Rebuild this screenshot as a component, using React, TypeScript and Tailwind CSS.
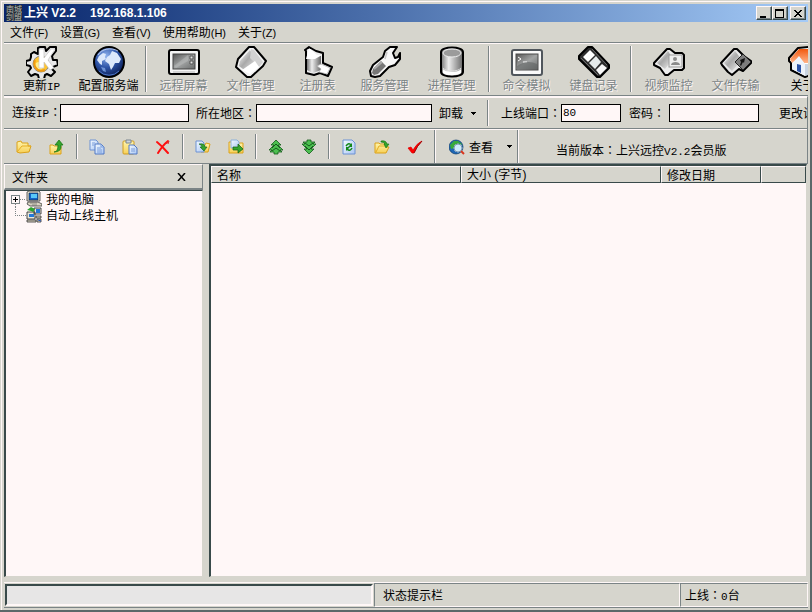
import React, { useState } from 'react';

const FACE = 'bg-[#d6d5cd]';

// ---------- shared bits ----------

const Defs = () => (
  <svg width="0" height="0" className="absolute" aria-hidden="true">
    <defs>
      <linearGradient id="silver" x1="0" y1="0" x2="1" y2="1">
        <stop offset="0" stopColor="#ffffff" />
        <stop offset="0.45" stopColor="#a9a9a9" />
        <stop offset="1" stopColor="#f4f4f4" />
      </linearGradient>
      <linearGradient id="screen" x1="0" y1="0" x2="1" y2="1">
        <stop offset="0" stopColor="#555" />
        <stop offset="0.5" stopColor="#a2a4a4" />
        <stop offset="1" stopColor="#686a6a" />
      </linearGradient>
      <linearGradient id="tube" x1="0" x2="1">
        <stop offset="0" stopColor="#777" />
        <stop offset="0.35" stopColor="#ededed" />
        <stop offset="1" stopColor="#666" />
      </linearGradient>
      <radialGradient id="globe" cx="0.4" cy="0.3" r="0.75">
        <stop offset="0" stopColor="#8fb2ee" />
        <stop offset="0.5" stopColor="#2e55a8" />
        <stop offset="1" stopColor="#07184e" />
      </radialGradient>
      <linearGradient id="roof" x1="0" y1="0" x2="0" y2="1">
        <stop offset="0" stopColor="#f2590f" />
        <stop offset="1" stopColor="#ffb48a" />
      </linearGradient>
      <linearGradient id="folder" x1="0" y1="0" x2="0" y2="1">
        <stop offset="0" stopColor="#fff6ae" />
        <stop offset="1" stopColor="#f7cf56" />
      </linearGradient>
      <linearGradient id="page" x1="0" y1="0" x2="1" y2="1">
        <stop offset="0" stopColor="#f4faff" />
        <stop offset="1" stopColor="#a9c6f3" />
      </linearGradient>
    </defs>
  </svg>
);

const Big = ({ children }: { children: React.ReactNode }) => (
  <svg width="32" height="32" viewBox="0 0 32 32" aria-hidden="true" className="shrink-0">
    {children}
  </svg>
);

const Small = ({ children }: { children: React.ReactNode }) => (
  <svg width="16" height="16" viewBox="0 0 16 16" aria-hidden="true" className="shrink-0">
    {children}
  </svg>
);

const Latin = ({ children }: { children: React.ReactNode }) => (
  <span className="font-['Liberation_Mono',monospace] text-[11px]">{children}</span>
);

const Colon = () => <span className="font-['Noto_Sans_CJK_TC',sans-serif]">：</span>;

const Arrow = () => (
  <svg width="5" height="3" viewBox="0 0 5 3" shapeRendering="crispEdges" aria-hidden="true">
    <path d="M0 0h5v1H4v1H3v1H2V2H1V1H0z" />
  </svg>
);

const Separator = ({ className = '' }: { className?: string }) => (
  <div className={`flex shrink-0 justify-center self-stretch ${className}`}>
    <div className="w-0.5 border-l border-r border-l-[#7b8486] border-r-[#fff7f7]" />
  </div>
);

// ---------- large icons ----------

const GearIcon = () => (
  <Big>
    <path
      d="M5 8l3-2 4 2V2l2-1h5l1 4 4-4h6v4l-4 5 1 4h4l1 5-5 2-1 2 3 3-4 4-4-2-2 1-1 4h-5l-1-4-3-1-4 2-3-4 3-4-1-2-4-1v-4l4-1 1-3z"
      fill="#e9e9e9" stroke="#000" strokeWidth="2" strokeLinejoin="round"
    />
    <circle cx="15" cy="18" r="8" fill="#ffc42e" stroke="#8a8a8a" />
    <circle cx="13" cy="20" r="4" fill="#ffee8a" />
    <path d="M9 14a8 8 0 0 0 3 10 8 8 0 0 0 7 0" fill="none" stroke="#f09a10" strokeWidth="2" />
    <path d="M13 3h5v9l7-9h4l-7 11 6 8-4 2-6-8v6h-5z" fill="#fff" stroke="#c4c4c4" strokeWidth="0.7" />
  </Big>
);

const GlobeIcon = () => (
  <Big>
    <circle cx="16" cy="16" r="15" fill="url(#globe)" stroke="#000" strokeWidth="2" />
    <path d="M4 14l2-4 4-3 3 1-1 3 1 2-4 2 0 4-2-1zM14 11l3-2 2-4 5 2 4 6-2 4-4 0-2 4-2 3-2-6-4-3z" fill="#dce8fb" />
    <path d="M8 21l4 1 1 4-3-1z" fill="#6c91d4" />
    <path d="M5 9a13 10 0 0 1 20-4" fill="none" stroke="#e8f0ff" strokeOpacity="0.7" />
    <path d="M6 25a14 14 0 0 0 20 0" fill="none" stroke="#4c76c4" />
  </Big>
);

const ScreenIcon = () => (
  <Big>
    <rect x="1" y="4" width="30" height="24" rx="2" fill="#f4f4f4" stroke="#000" strokeWidth="2" />
    <rect x="5" y="8" width="22" height="15" fill="url(#screen)" stroke="#444" />
    <path d="M6 20L20 9v6L8 22z" fill="#b9bcbc" opacity="0.5" />
    <path d="M22 10h3v3h-3zM22 15h3v3h-3z" fill="#e6e6e6" stroke="#555" />
    <path d="M5 26h22" stroke="#b5b5b5" />
  </Big>
);

const DiamondPagesIcon = () => (
  <Big>
    <path d="M14 1h5l12 14-3 5-12 11h-4L1 21 3 13z" fill="#f2f2f2" stroke="#000" strokeWidth="2" strokeLinejoin="round" />
    <path d="M5 15L15 4l7 13-10 9-8-6z" fill="url(#silver)" />
    <path d="M16 3l3 1 9 12-4 5-9-9z" fill="#d2d2d2" />
    <path d="M7 24l13-9 4 6-9 7z" fill="#fff" />
  </Big>
);

const RegistryIcon = () => (
  <Big>
    <path d="M3 4l4-3 7 4 7 2v10l9 4-4 9-8-3-6 2-8-2V5z" fill="#ededed" stroke="#000" strokeWidth="2" strokeLinejoin="round" />
    <path d="M5 12v12l6 3 8-3V9l-7 3z" fill="url(#tube)" />
    <path d="M4 13l3-11 8 7 5 0-7 4z" fill="#fff" />
    <path d="M15 20l4-2 9 4-3 6-8-2 2-3z" fill="#fff" stroke="#aaa" strokeWidth="0.7" />
  </Big>
);

const WrenchIcon = () => (
  <Big>
    <path
      d="M16 5l5-4h7l-4 6 2 5 3-1 2-4v6l-5 6-6 2-9 9-5 1-4-1-1-5 3-6 10-8z"
      fill="#f7f7f7" stroke="#000" strokeWidth="2" strokeLinejoin="round"
    />
    <path d="M12 15l5 5-8 8-4 1-2-2 1-4z" fill="#777" />
    <path d="M5 23l8-7" stroke="#aaa" strokeWidth="2" />
    <path d="M16 13l2-7" stroke="#c8c8c8" strokeWidth="1.5" />
  </Big>
);

const CylinderIcon = () => (
  <Big>
    <path d="M5 6c0-6 22-6 22 0v20c0 6-22 6-22 0z" fill="url(#tube)" stroke="#000" strokeWidth="2" />
    <ellipse cx="16" cy="7" rx="9" ry="4" fill="#9b9b9b" stroke="#eee" />
    <path d="M7 23c3 4 15 4 18 0v4c-3 3-15 3-18 0z" fill="#fff" />
    <path d="M7 22c3 4 15 4 18 0" fill="none" stroke="#ddd" />
  </Big>
);

const ConsoleIcon = () => (
  <Big>
    <rect x="1" y="4" width="30" height="25" rx="2" fill="#fafafa" stroke="#50565c" strokeWidth="2" />
    <rect x="5" y="8" width="22" height="16" fill="url(#screen)" stroke="#4b4b4b" />
    <path d="M7 11l3 2-3 2M12 16h4" fill="none" stroke="#fff" />
    <path d="M6 20q10-7 20-2v5H6z" fill="#606464" opacity="0.6" />
  </Big>
);

const KeysIcon = () => (
  <Big>
    <path d="M10 1h4l17 18v3l-9 9h-3L1 13v-3z" fill="#2d2d2d" stroke="#000" strokeWidth="2" strokeLinejoin="round" />
    <path d="M5 11l7-7 5 5-7 7z" fill="#fff" />
    <path d="M11 17l7-7 5 6-6 7z" fill="#e6ebeb" />
    <path d="M18 24l6-6 5 4-7 7z" fill="#f8f8f8" />
    <path d="M3 12l17 17M14 3l15 16" stroke="#8a8a8a" strokeWidth="0.7" />
  </Big>
);

const VideoIcon = () => (
  <Big>
    <path d="M14 3h3l5 4h7l2 2v13l-2 2h-8l-6 5h-3l-5-7-6-3v-2z" fill="#ececec" stroke="#000" strokeWidth="2" strokeLinejoin="round" />
    <path d="M4 17L15 5l5 8-8 10z" fill="url(#silver)" />
    <rect x="16" y="9" width="13" height="12" fill="#eee" stroke="#999" />
    <circle cx="22" cy="13" r="2" fill="#8b8b8b" />
    <path d="M18 19c0-4 9-4 9 0z" fill="#8b8b8b" />
  </Big>
);

const TransferIcon = () => (
  <Big>
    <path d="M14 3h3l7 7 7 5v2l-8 8-4-2-7 6-4-3-6-7-1-2z" fill="#e8e8e8" stroke="#000" strokeWidth="2" strokeLinejoin="round" />
    <path d="M4 17L15 5l7 9-10 11z" fill="url(#silver)" />
    <path d="M23 8l8 8-8 8-8-8z" fill="#7c7c7c" stroke="#222" />
    <path d="M20 14l5-2-1 5-1-1-2 4-1-1 1-3z" fill="#111" />
  </Big>
);

const HouseIcon = () => (
  <Big>
    <path d="M2 12L11 2l11-1 9 11-2 4v11l-11 4L4 24v-7l-2-2z" fill="#fff" stroke="#000" strokeWidth="2" strokeLinejoin="round" />
    <path d="M3 13L12 3h10l8 10-2 4H17l-5-6-7 6z" fill="url(#roof)" />
    <path d="M5 18l7-8 6 8v12L5 23z" fill="#eef3fb" />
    <path d="M10 18l4 1v8l-4-2z" fill="#2d54a8" />
    <path d="M18 18h10v9l-10 3z" fill="#c9d4e2" />
  </Big>
);

// ---------- small icons ----------

const FolderIcon = () => (
  <Small>
    <path d="M1 13V3l4-1 1 2h6v3h3l-2 6-9 1z" fill="url(#folder)" stroke="#dba21b" />
    <path d="M1 13l5-6 9 0" fill="none" stroke="#e5ad25" />
  </Small>
);

const FolderUpIcon = () => (
  <Small>
    <path d="M1 6h3l1 1h7v8H1z" fill="url(#folder)" stroke="#dba21b" />
    <path d="M5 13q4 0 4-7H6l4-5 4 5h-2q1 7-7 7z" fill="#35a52e" stroke="#12700f" strokeWidth="0.7" />
  </Small>
);

const CopyIcon = () => (
  <Small>
    <path d="M1 1h6l2 2v8H1z" fill="url(#page)" stroke="#6d92d4" />
    <path d="M6 5h6l3 3v7H6z" fill="url(#page)" stroke="#5079c4" />
    <path d="M12 5v3h3M8 9h4M8 11h5M8 13h5M3 4h3M3 6h2" fill="none" stroke="#7c9fdb" />
  </Small>
);

const PasteIcon = () => (
  <Small>
    <rect x="1" y="2" width="11" height="13" rx="1" fill="url(#folder)" stroke="#cf9d23" />
    <path d="M4 1h5v3H4z" fill="#cdd5dd" stroke="#7d8791" />
    <path d="M7 6h5l3 3v6H7z" fill="url(#page)" stroke="#5079c4" />
    <path d="M9 10h4M9 12h4" stroke="#7c9fdb" />
  </Small>
);

const DeleteIcon = () => (
  <Small>
    <path d="M2 3q5 4 11 11M13 2Q8 6 3 14" fill="none" stroke="#ff1010" strokeWidth="2" strokeLinecap="round" />
    <path d="M11 5l3-3-1 3" stroke="#e03030" fill="#ff8a8a" />
  </Small>
);

const MoveIcon = () => (
  <Small>
    <path d="M6 6h4l1-2 4 1-2 8H6z" fill="url(#folder)" stroke="#dba21b" />
    <path d="M1 2h6l2 2v9H1z" fill="url(#page)" stroke="#6d92d4" />
    <path d="M4 5q6-1 6 3h2l-3 4-4-4h2q0-2-3-3z" fill="#35a52e" stroke="#12601a" strokeWidth="0.6" />
  </Small>
);

const MoveToIcon = () => (
  <Small>
    <path d="M1 3h4l1 1h9v10H1z" fill="url(#folder)" stroke="#dba21b" />
    <path d="M3 1h6l2 2v6H3z" fill="url(#page)" stroke="#8bb0da" />
    <path d="M5 8h5V5l5 5-5 4v-3H5z" fill="#35a52e" stroke="#12600f" strokeWidth="0.7" />
  </Small>
);

const TreePath = () => (
  <>
    <path d="M8 1l5 5h-3l5 5h-3l2 2h-4v2H6v-2H2l2-2H1l5-5H3z" fill="#4cbf50" stroke="#145c1b" strokeWidth="0.8" />
    <path d="M4 9l4-4 4 4M4 12l4-3 4 3" fill="none" stroke="#145c1b" />
  </>
);

const UpIcon = () => <Small><TreePath /></Small>;
const DownIcon = () => (
  <Small>
    <g transform="rotate(180 8 8)"><TreePath /></g>
  </Small>
);

const RefreshIcon = () => (
  <Small>
    <path d="M2 1h9l3 3v11H2z" fill="url(#page)" stroke="#6d92d4" />
    <path d="M5 7q3-4 5-1M11 9q-2 4-5 1" fill="none" stroke="#15891a" strokeWidth="1.5" />
    <path d="M11 4v4H7zM5 12V8h4z" fill="#15891a" />
  </Small>
);

const OpenIcon = () => (
  <Small>
    <path d="M1 14V4h4l1 1h7v3h2l-3 6z" fill="url(#folder)" stroke="#dba21b" />
    <path d="M2 13l3-6h9" fill="none" stroke="#e5ad25" />
    <path d="M7 2q5-1 6 3h2l-3 4-2-4h1q-1-2-4-2z" fill="#35a52e" stroke="#12700f" strokeWidth="0.6" />
  </Small>
);

const CheckIcon = () => (
  <Small>
    <path d="M1 9l3-1 2 3q4-7 9-9-5 5-8 12H5z" fill="#f00" stroke="#e00000" strokeWidth="0.7" />
    <path d="M7 14q3-7 8-12" fill="none" stroke="#7b0000" strokeWidth="0.7" />
  </Small>
);

const SearchGlobeIcon = () => (
  <Small>
    <circle cx="7" cy="8" r="7" fill="#1d66b5" stroke="#0f3d6b" strokeWidth="0.7" />
    <path d="M1 6l4-4 4 0 1 3-4 1-1 3-3 1zM9 2l4 3-2 2z" fill="#38a93b" />
    <circle cx="9" cy="9" r="4" fill="#cdeafb" stroke="#e9f1f8" />
    <circle cx="9" cy="9" r="4" fill="none" stroke="#4a6f92" strokeWidth="0.7" />
    <path d="M12 12l3 3" stroke="#d9351d" strokeWidth="2" />
  </Small>
);

const ComputerIcon = () => (
  <Small>
    <path d="M1 1l2-1h10l1 1v9H1z" fill="#e3e0d2" stroke="#3c3c3c" strokeWidth="0.8" />
    <path d="M3 2h9v7H3z" fill="#1465c9" stroke="#123" strokeWidth="0.6" />
    <path d="M5 3h6v4H5z" fill="#59c8f7" />
    <path d="M2 11h10l4 2v2H4l-3-2z" fill="#d9d4c2" stroke="#3c3c3c" strokeWidth="0.8" />
    <path d="M4 12h7M6 14h5" stroke="#6b6b6b" strokeWidth="0.7" />
  </Small>
);

const HostsIcon = () => (
  <Small>
    <path d="M8 1h7v6H8zM1 5h8v7H1z" fill="#e9e6da" stroke="#333" strokeWidth="0.9" />
    <path d="M10 2h4v4h-4zM3 7h5v3H3z" fill="#2478d8" />
    <path d="M1 3l4-3 4 2-2 3-2-1z" fill="#2ca42f" />
    <path d="M1 13h9v2H1zM10 9h5v2h-5zM11 12h4v3h-4z" fill="#d9d4c2" stroke="#333" strokeWidth="0.8" />
    <path d="M12 13l3 1" stroke="#2454b8" />
  </Small>
);

// ---------- data ----------

const menus: [string, string][] = [
  ['文件', 'F'],
  ['设置', 'G'],
  ['查看', 'V'],
  ['使用帮助', 'H'],
  ['关于', 'Z'],
];

interface Tool {
  label: React.ReactNode;
  icon: React.FC;
  enabled?: boolean;
}

const mainTools: Tool[][] = [
  [
    { label: <>更新<Latin>IP</Latin></>, icon: GearIcon, enabled: true },
    { label: '配置服务端', icon: GlobeIcon, enabled: true },
  ],
  [
    { label: '远程屏幕', icon: ScreenIcon },
    { label: '文件管理', icon: DiamondPagesIcon },
    { label: '注册表', icon: RegistryIcon },
    { label: '服务管理', icon: WrenchIcon },
    { label: '进程管理', icon: CylinderIcon },
  ],
  [
    { label: '命令模拟', icon: ConsoleIcon },
    { label: '键盘记录', icon: KeysIcon },
  ],
  [
    { label: '视频监控', icon: VideoIcon },
    { label: '文件传输', icon: TransferIcon },
    { label: '关于', icon: HouseIcon, enabled: true },
  ],
];

const fileTools: { name: string; icon: React.FC }[][] = [
  [{ name: '打开', icon: FolderIcon }, { name: '向上', icon: FolderUpIcon }],
  [{ name: '复制', icon: CopyIcon }, { name: '粘贴', icon: PasteIcon }, { name: '删除', icon: DeleteIcon }],
  [{ name: '下载', icon: MoveIcon }, { name: '上传', icon: MoveToIcon }],
  [{ name: '上移', icon: UpIcon }, { name: '下移', icon: DownIcon }],
  [{ name: '刷新', icon: RefreshIcon }, { name: '远程打开', icon: OpenIcon }, { name: '确定', icon: CheckIcon }],
];

// ---------- sections ----------

const CaptionButton = ({ name, children, className = '' }: { name: string; children: React.ReactNode; className?: string }) => (
  <button
    type="button"
    aria-label={name}
    className={`flex h-3.5 w-4 items-center justify-center border border-t-[#fff7f7] border-l-[#fff7f7] border-r-[#394a4a] border-b-[#394a4a] ${FACE} shadow-[inset_-1px_-1px_0_#7b8486] ${className}`}
  >
    <svg width="10" height="9" viewBox="0 0 10 9" fill="#000" shapeRendering="crispEdges">
      {children}
    </svg>
  </button>
);

const TitleBar = () => (
  <header className="flex h-[18px] shrink-0 items-center bg-linear-to-r from-[#08246b] to-[#a5cbf7] px-0.5 text-white">
    <svg width="16" height="16" viewBox="0 0 16 16" fill="#b4b6ab" fontSize="8" className="shrink-0 bg-[#222b38]" aria-hidden="true">
      <text x="0" y="7">南城</text>
      <text x="0" y="15">剑盟</text>
    </svg>
    <h1 className="flex gap-3.5 pl-0.5 font-['Liberation_Sans','Noto_Sans_CJK_SC',sans-serif] text-xs font-bold whitespace-pre">
      <span>上兴 V2.2</span>
      <span>192.168.1.106</span>
    </h1>
    <div className="ml-auto flex">
      <CaptionButton name="最小化"><path d="M1 7h6v2H1z" /></CaptionButton>
      <CaptionButton name="最大化"><path d="M0 0h9v9H0zM1 2v6h7V2z" fillRule="evenodd" /></CaptionButton>
      <CaptionButton name="关闭" className="ml-0.5">
        <path d="M1 1h2v1h1v1h2V2h1V1h2v1H8v1H7v1H6v1h1v1h1v1h1v1H7V7H6V6H4v1H3v1H1V7h1V6h1V5h1V4H3V3H2V2H1z" />
      </CaptionButton>
    </div>
  </header>
);

const MenuBar = () => (
  <nav className="flex h-5 shrink-0 items-center">
    {menus.map(([label, key]) => (
      <button key={key} type="button" className="px-1.5">
        {label}
        <span className="font-['Liberation_Sans',sans-serif] text-[11px]">({key})</span>
      </button>
    ))}
  </nav>
);

const MainToolbar = () => (
  <div className="flex h-[54px] shrink-0 overflow-hidden border-t border-b border-[#7b8486] py-px pl-1 shadow-[inset_0_1px_0_#fff7f7]">
    {mainTools.map((group, i) => (
      <React.Fragment key={i}>
        {i > 0 && <Separator className="w-2 py-0.5" />}
        {group.map((tool, j) => (
          <button
            key={j}
            type="button"
            disabled={!tool.enabled}
            className={`flex w-[67px] shrink-0 flex-col items-center pt-0.5 leading-[14px] whitespace-nowrap ${
              tool.enabled ? 'text-black' : 'text-[#7b8486] [text-shadow:1px_1px_0_#fff7f7]'
            }`}
          >
            <tool.icon />
            <span>{tool.label}</span>
          </button>
        ))}
      </React.Fragment>
    ))}
  </div>
);

const inputClass =
  "h-[18px] shrink-0 border border-black bg-[#fff7f7] px-px font-['Liberation_Mono','Noto_Sans_CJK_SC',monospace] text-[11px] outline-none";

const ConnectionBar = () => {
  const [port, setPort] = useState('80');
  return (
    <form className="flex h-8 shrink-0 items-center overflow-hidden border-t border-b border-t-[#fff7f7] border-b-[#7b8486] pl-2 whitespace-nowrap">
      <label htmlFor="ip" className="w-12 shrink-0">连接<Latin>IP</Latin><Colon /></label>
      <input id="ip" className={`${inputClass} w-[129px]`} />
      <label htmlFor="area" className="w-[67px] shrink-0 pl-[7px]">所在地区<Colon /></label>
      <input id="area" className={`${inputClass} w-[176px]`} />
      <button type="button" className="flex shrink-0 items-center gap-2 px-[7px]">
        卸载
        <Arrow />
      </button>
      <Separator className="w-2.5 py-0.5" />
      <label htmlFor="port" className="w-[68px] shrink-0 pl-2">上线端口<Colon /></label>
      <input id="port" value={port} onChange={(e) => setPort(e.target.value)} className={`${inputClass} w-[60px]`} />
      <label htmlFor="password" className="w-12 shrink-0 pl-2">密码<Colon /></label>
      <input id="password" type="password" className={`${inputClass} w-[90px]`} />
      <button type="button" className="ml-5 shrink-0">更改设置</button>
    </form>
  );
};

const FileToolbar = () => (
  <div className="flex h-[34px] shrink-0 overflow-hidden border-t border-t-[#fff7f7] pl-[3px] whitespace-nowrap">
    {fileTools.map((group, i) => (
      <React.Fragment key={i}>
        {i > 0 && <Separator className="w-[7px] py-1" />}
        {group.map(({ name, icon: Icon }) => (
          <button key={name} type="button" aria-label={name} className="flex w-[33px] shrink-0 items-center justify-center">
            <Icon />
          </button>
        ))}
      </React.Fragment>
    ))}
    <Separator className="w-2" />
    <button type="button" className="flex w-[77px] shrink-0 items-center pl-2.5">
      <SearchGlobeIcon />
      <span className="pl-1">查看</span>
      <span className="ml-auto pr-1"><Arrow /></span>
    </button>
    <Separator className="w-1" />
    <p className="pt-3 pl-9">
      当前版本<Colon />上兴远控<Latin>V2.2</Latin>会员版
    </p>
  </div>
);

const FolderPane = () => (
  <aside className="flex w-[199px] shrink-0 flex-col">
    <div className="flex h-[26px] shrink-0 items-center justify-between border border-b-2 border-t-[#fff7f7] border-l-[#fff7f7] border-r-[#7b8486] border-b-[#7b8486] pr-4 pl-[7px]">
      <h2>文件夹</h2>
      <button type="button" aria-label="关闭文件夹栏">
        <svg width="9" height="8" viewBox="0 0 9 8" stroke="#000" strokeWidth="1.5">
          <path d="M1 0l7 8M8 0L1 8" />
        </svg>
      </button>
    </div>
    <ul className="flex-1 border border-l-2 border-t-[#394a4a] border-l-[#394a4a] border-r-[#d6d5cd] border-b-[#d6d5cd] bg-[#fff7f7] pl-1 leading-4">
      <li className="flex h-4 items-center">
        <button type="button" aria-label="展开" className="shrink-0">
          <svg width="16" height="16" viewBox="0 0 16 16" fill="none" shapeRendering="crispEdges">
            <path d="M5.5 13v3M10 8.5h6" stroke="#7b8486" strokeDasharray="1 1" />
            <path d="M1.5 4.5h8v8h-8z" stroke="#7b8486" />
            <path d="M3 8.5h5M5.5 6v5" stroke="#000" />
          </svg>
        </button>
        <ComputerIcon />
        <span className="pl-1">我的电脑</span>
      </li>
      <li className="flex h-4 items-center">
        <svg width="16" height="16" viewBox="0 0 16 16" fill="none" shapeRendering="crispEdges" aria-hidden="true">
          <path d="M5.5 0v8.5H16" stroke="#7b8486" strokeDasharray="1 1" />
        </svg>
        <HostsIcon />
        <span className="pl-1">自动上线主机</span>
      </li>
    </ul>
  </aside>
);

const headClass =
  'border-t border-r border-b border-l border-t-[#fff7f7] border-l-[#fff7f7] border-r-[#394a4a] border-b-[#394a4a] pl-[5px] text-left font-normal';

const FilePane = () => (
  <section className="min-w-0 flex-1 border-t-2 border-r border-b border-l-2 border-t-[#394a4a] border-l-[#394a4a] border-r-[#d6d5cd] border-b-[#d6d5cd] bg-[#fff7f7]">
    <table className={`w-full table-fixed border-separate border-spacing-0 ${FACE}`}>
      <thead>
        <tr className="h-4 leading-[14px]">
          <th className={`${headClass} w-[250px]`}>名称</th>
          <th className={`${headClass} w-[200px]`}>
            大小<span className="font-['Liberation_Sans',sans-serif]"> (</span>字节
            <span className="font-['Liberation_Sans',sans-serif]">)</span>
          </th>
          <th className={`${headClass} w-[100px]`}>修改日期</th>
          <th className={headClass} />
        </tr>
      </thead>
      <tbody />
    </table>
  </section>
);

const StatusBar = () => (
  <footer className="flex h-[26px] shrink-0 border-t border-b border-t-[#fff7f7] border-b-[#7b8486]">
    <div className="w-[370px] shrink-0 p-px">
      <div
        role="progressbar"
        aria-label="进度"
        aria-valuenow={0}
        className="h-full border-2 border-t-[#394a4a] border-l-[#394a4a] border-r-[#fff7f7] border-b-[#fff7f7] bg-[#e7e6e6]"
      />
    </div>
    <p className="flex flex-1 items-center border border-t-[#7b8486] border-l-[#7b8486] border-r-[#fff7f7] border-b-[#fff7f7] pl-2">
      状态提示栏
    </p>
    <p className="w-32 border border-t-[#7b8486] border-l-[#7b8486] border-r-[#fff7f7] border-b-[#fff7f7] pt-[3px] pl-1">
      上线<Colon /><Latin>0</Latin>台
    </p>
  </footer>
);

export default function App() {
  return (
    <div
      className={`flex h-screen flex-col overflow-hidden border-r-2 border-b-2 border-[#5a6769] ${FACE} font-['Noto_Sans_CJK_SC',sans-serif] text-xs leading-4 text-black shadow-[inset_1px_1px_0_#d6d5cd,inset_2px_2px_0_#fff7f7]`}
    >
      <Defs />
      <div className="flex min-h-0 flex-1 flex-col pt-1 pr-0.5 pb-0.5 pl-1">
        <TitleBar />
        <MenuBar />
        <MainToolbar />
        <div className="flex shrink-0 flex-col border-t border-r border-t-[#fff7f7] border-r-[#7b8486]">
          <ConnectionBar />
          <FileToolbar />
        </div>
        <main className="flex min-h-0 flex-1 gap-1.5 border-t border-[#7b8486] pr-px pb-[5px]">
          <FolderPane />
          <FilePane />
        </main>
        <StatusBar />
      </div>
    </div>
  );
}
